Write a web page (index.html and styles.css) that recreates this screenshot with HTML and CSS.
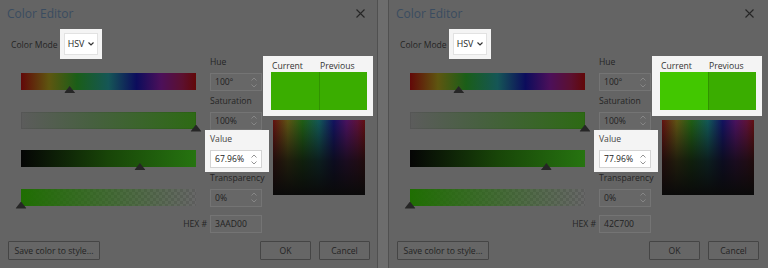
FILE: index.html
```html
<!DOCTYPE html>
<html>
<head>
<meta charset="utf-8">
<link rel="stylesheet" href="styles.css">
</head>
<body>
<div class="screen">
  <section class="dialog first">
    <div class="inner">
      <header class="titlebar">
        <span class="title">Color Editor</span>
        <svg class="close" width="9" height="9" viewBox="0 0 9 9"><path d="M0.5 0.5L8.5 8.5M8.5 0.5L0.5 8.5"/></svg>
      </header>
      <div class="mode-row">
        <span class="lbl mode-lbl">Color Mode</span>
        <div class="hl hl-mode">
          <div class="select"><span>HSV</span><svg width="6" height="4" viewBox="0 0 6 4"><polyline points="0.5,0.5 3,3 5.5,0.5"/></svg></div>
        </div>
      </div>
      <div class="body">
        <div class="controls">
          <div class="slider"><div class="bar hue"></div><span class="thumb" style="left:27.8%"></span></div>
          <div class="field"><span class="lbl">Hue</span><div class="input"><span>100º</span><svg class="spin" width="6" height="11" viewBox="0 0 6 11"><polyline points="0.5,3.5 3,1 5.5,3.5"/><polyline points="0.5,7.5 3,10 5.5,7.5"/></svg></div></div>
          <div class="slider"><div class="bar sat"></div><span class="thumb" style="left:100%"></span></div>
          <div class="field"><span class="lbl">Saturation</span><div class="input"><span>100%</span><svg class="spin" width="6" height="11" viewBox="0 0 6 11"><polyline points="0.5,3.5 3,1 5.5,3.5"/><polyline points="0.5,7.5 3,10 5.5,7.5"/></svg></div></div>
          <div class="slider"><div class="bar val"></div><span class="thumb" style="left:67.96%"></span></div>
          <div class="field hl hl-field"><span class="lbl">Value</span><div class="input"><span>67.96%</span><svg class="spin" width="6" height="11" viewBox="0 0 6 11"><polyline points="0.5,3.5 3,1 5.5,3.5"/><polyline points="0.5,7.5 3,10 5.5,7.5"/></svg></div></div>
          <div class="slider"><div class="bar alpha"></div><span class="thumb" style="left:0%"></span></div>
          <div class="field"><span class="lbl">Transparency</span><div class="input"><span>0%</span><svg class="spin" width="6" height="11" viewBox="0 0 6 11"><polyline points="0.5,3.5 3,1 5.5,3.5"/><polyline points="0.5,7.5 3,10 5.5,7.5"/></svg></div></div>
          <div class="hex-lbl lbl">HEX #</div>
          <div class="input hex"><span>3AAD00</span></div>
        </div>
        <div class="preview">
          <div class="hl hl-swatch">
            <div class="sw-labels"><span>Current</span><span>Previous</span></div>
            <div class="swatches"><div class="sw" style="background:#3aad00"></div><div class="sw" style="background:#3aad00"></div></div>
          </div>
          <div class="spectrum"></div>
        </div>
      </div>
      <footer class="footer">
        <button class="btn save">Save color to style...</button>
        <button class="btn ok">OK</button>
        <button class="btn cancel">Cancel</button>
      </footer>
    </div>
  </section>
  <section class="dialog second">
    <div class="inner">
      <header class="titlebar">
        <span class="title">Color Editor</span>
        <svg class="close" width="9" height="9" viewBox="0 0 9 9"><path d="M0.5 0.5L8.5 8.5M8.5 0.5L0.5 8.5"/></svg>
      </header>
      <div class="mode-row">
        <span class="lbl mode-lbl">Color Mode</span>
        <div class="hl hl-mode">
          <div class="select"><span>HSV</span><svg width="6" height="4" viewBox="0 0 6 4"><polyline points="0.5,0.5 3,3 5.5,0.5"/></svg></div>
        </div>
      </div>
      <div class="body">
        <div class="controls">
          <div class="slider"><div class="bar hue"></div><span class="thumb" style="left:27.8%"></span></div>
          <div class="field"><span class="lbl">Hue</span><div class="input"><span>100º</span><svg class="spin" width="6" height="11" viewBox="0 0 6 11"><polyline points="0.5,3.5 3,1 5.5,3.5"/><polyline points="0.5,7.5 3,10 5.5,7.5"/></svg></div></div>
          <div class="slider"><div class="bar sat"></div><span class="thumb" style="left:100%"></span></div>
          <div class="field"><span class="lbl">Saturation</span><div class="input"><span>100%</span><svg class="spin" width="6" height="11" viewBox="0 0 6 11"><polyline points="0.5,3.5 3,1 5.5,3.5"/><polyline points="0.5,7.5 3,10 5.5,7.5"/></svg></div></div>
          <div class="slider"><div class="bar val"></div><span class="thumb" style="left:77.96%"></span></div>
          <div class="field hl hl-field"><span class="lbl">Value</span><div class="input"><span>77.96%</span><svg class="spin" width="6" height="11" viewBox="0 0 6 11"><polyline points="0.5,3.5 3,1 5.5,3.5"/><polyline points="0.5,7.5 3,10 5.5,7.5"/></svg></div></div>
          <div class="slider"><div class="bar alpha"></div><span class="thumb" style="left:0%"></span></div>
          <div class="field"><span class="lbl">Transparency</span><div class="input"><span>0%</span><svg class="spin" width="6" height="11" viewBox="0 0 6 11"><polyline points="0.5,3.5 3,1 5.5,3.5"/><polyline points="0.5,7.5 3,10 5.5,7.5"/></svg></div></div>
          <div class="hex-lbl lbl">HEX #</div>
          <div class="input hex"><span>42C700</span></div>
        </div>
        <div class="preview">
          <div class="hl hl-swatch">
            <div class="sw-labels"><span>Current</span><span>Previous</span></div>
            <div class="swatches"><div class="sw" style="background:#42c700"></div><div class="sw" style="background:#3aad00"></div></div>
          </div>
          <div class="spectrum"></div>
        </div>
      </div>
      <footer class="footer">
        <button class="btn save">Save color to style...</button>
        <button class="btn ok">OK</button>
        <button class="btn cancel">Cancel</button>
      </footer>
    </div>
  </section>
</div>
</body>
</html>
```

FILE: styles.css
```css
* { box-sizing: border-box; }
html, body { margin: 0; padding: 0; }
body {
  width: 768px;
  height: 268px;
  overflow: hidden;
  background: #6d6d6d;
  font-family: "Open Sans", "Noto Sans", sans-serif;
  color: #222;
}
.screen {
  display: flex;
  gap: 10px;
  height: 268px;
}
.dialog {
  background: #646464;
  height: 268px;
  flex: 0 0 auto;
}
.dialog.first { border-right: 1px solid #505050; width: 378px; }
.dialog.second { border-left: 1px solid #505050; flex: 1 1 auto; }
.inner {
  width: 377px;
  height: 268px;
  display: flex;
  flex-direction: column;
}
.titlebar {
  height: 28px;
  display: flex;
  align-items: center;
  justify-content: space-between;
  padding: 0 12px 0 7px;
}
.title {
  font-size: 12px;
  color: #3a4c60;
  line-height: 14px;
}
.close { margin-top: -2px; }
.close path { stroke: #262626; stroke-width: 1.1; fill: none; }

.lbl {
  font-size: 8.6px;
  line-height: 12px;
  color: #242424;
  white-space: nowrap;
}
.mode-row {
  height: 28px;
  display: flex;
  align-items: flex-start;
  padding-left: 11px;
  gap: 2px;
}
.mode-lbl { margin-top: 11px; }
.hl { background: #f4f4f4; }
.hl-mode {
  margin-top: 1px;
  width: 42px;
  height: 30px;
  padding: 4px;
}
.select {
  height: 22px;
  background: #fff;
  border: 1px solid #e2e2e2;
  display: flex;
  align-items: center;
  gap: 4px;
  padding-left: 3px;
  font-size: 8.8px;
  color: #1e1e1e;
}
.select polyline { stroke: #333; stroke-width: 1.2; fill: none; }

.body {
  display: flex;
  padding-left: 21px;
}
.controls {
  display: grid;
  grid-template-columns: 175px 52px;
  column-gap: 14px;
  row-gap: 3.5px;
}
.field {
  display: flex;
  flex-direction: column;
  height: 35px;
}
.field .input { margin-top: 5px; }
.hl-field {
  height: auto;
  padding: 3px 7px 4px 5px;
  margin: -3px -7px -4px -5px;
}
.input {
  height: 18px;
  border: 1px solid #747474;
  background: #676767;
  display: flex;
  align-items: center;
  justify-content: space-between;
  padding: 0 4px 0 4px;
  font-size: 8.6px;
  color: #222;
}
.spin polyline { stroke: #8a8a8a; stroke-width: 0.9; fill: none; }
.hl-field .input { background: #fff; border-color: #d4d4d4; color: #222; }
.hl-field .spin polyline { stroke: #888; }
.hl-field .lbl { color: #444; }

.slider {
  position: relative;
  align-self: end;
  margin-bottom: 1px;
}
.bar {
  height: 17px;
}
.bar.hue {
  background: linear-gradient(to right, #620808 0%, #5e5610 16%, #1a5e18 32%, #155656 50%, #0c0c5c 66%, #4c105a 80%, #5c1030 92%, #620808 100%);
}
.bar.sat {
  background: linear-gradient(to right, #5c5c5c 0%, #476040 40%, #2d6a14 100%);
  box-shadow: inset 0 0 0 1px rgba(0,0,0,0.06);
}
.bar.val {
  background: linear-gradient(to right, #050505 0%, #184508 50%, #267410 100%);
}
.bar.alpha {
  background:
    linear-gradient(to right, #1f6e02 0%, rgba(31,110,2,0.55) 45%, rgba(31,110,2,0) 100%),
    repeating-conic-gradient(#5d5d5d 0% 25%, #686868 0% 50%) 0 0 / 6px 6px;
}
.thumb {
  position: absolute;
  top: 13px;
  width: 11px;
  height: 7px;
  transform: translateX(-50%);
  background: #262626;
  clip-path: polygon(50% 0, 100% 100%, 0 100%);
}
.hex-lbl {
  justify-self: end;
  margin-right: -11px;
  margin-top: 4.5px;
  align-self: center;
}
.input.hex { margin-top: 4.5px; }

.preview {
  margin-left: 1px;
  display: flex;
  flex-direction: column;
}
.hl-swatch {
  width: 110px;
  height: 60px;
  padding: 4px 6px 6px 8px;
}
.sw-labels {
  display: flex;
  height: 12px;
  font-size: 8.6px;
  line-height: 12px;
  color: #333;
}
.sw-labels span { width: 48px; padding-left: 1px; }
.swatches {
  display: flex;
  height: 38px;
}
.sw { width: 48px; height: 38px; }
.sw + .sw { border-left: 1px solid rgba(0,0,0,0.15); }
.spectrum {
  margin: 4px 0 0 10px;
  width: 92px;
  height: 75px;
  background:
    linear-gradient(to bottom, rgba(10,10,10,0) 0%, rgba(10,10,10,0.75) 55%, #0a0a0a 100%),
    linear-gradient(to right, #621010 0%, #5e5414 16%, #205e14 32%, #125858 50%, #12125e 66%, #4a125e 80%, #5e1238 92%, #621010 100%);
}

.footer {
  margin-top: auto;
  display: flex;
  align-items: flex-end;
  padding: 0 7px 8px 8px;
}
.btn {
  height: 19px;
  border: 1px solid #454545;
  background: #666;
  font-family: "Open Sans", "Noto Sans", sans-serif;
  font-size: 8.6px;
  color: #242424;
  padding: 0;
  border-radius: 1px;
}
.btn.save { width: 92px; }
.btn.ok { width: 51px; margin-left: auto; }
.btn.cancel { width: 51px; margin-left: 8px; }
```
